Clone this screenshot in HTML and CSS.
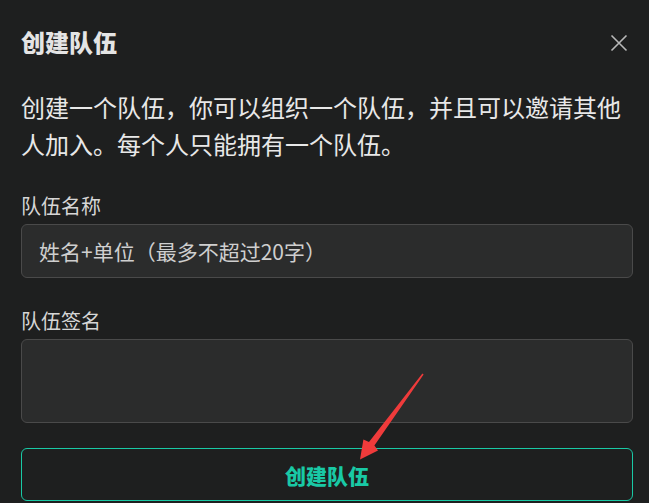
FILE: index.html
```html
<!DOCTYPE html>
<html lang="zh-CN">
<head>
<meta charset="utf-8">
<title>创建队伍</title>
<link rel="stylesheet" href="styles.css">
</head>
<body>
<div class="dialog">
  <div class="header">
    <h1 class="title">创建队伍</h1>
    <button class="close" aria-label="关闭">
      <svg width="18" height="18" viewBox="0 0 18 18"><path d="M1.5 1.5 L16.5 16.5 M16.5 1.5 L1.5 16.5" stroke="#b8b8b8" stroke-width="1.6" fill="none"/></svg>
    </button>
  </div>
  <p class="desc">创建一个队伍，你可以组织一个队伍，并且可以邀请其他人加入。每个人只能拥有一个队伍。</p>
  <label class="label label-first">队伍名称</label>
  <input class="field" type="text" placeholder="姓名+单位（最多不超过20字）">
  <label class="label">队伍签名</label>
  <textarea class="field area"></textarea>
  <button class="submit">创建队伍</button>
</div>
<svg class="arrow" width="649" height="503" viewBox="0 0 649 503">
  <polygon fill="#ef3b3b" points="423.6,374.4 374.4,445.6 378,450.6 360,459.5 363.4,439.6 369,441.9 422.4,373.6"/>
</svg>
</body>
</html>
```
FILE: styles.css
```css
* { box-sizing: border-box; }
html, body {
  margin: 0;
  padding: 0;
  background: #1e1f1f;
  width: 649px;
  height: 503px;
  overflow: hidden;
}
body {
  font-family: "Noto Sans CJK SC", "Noto Sans", sans-serif;
  color: #e2e2e2;
  position: relative;
}
.dialog {
  display: flex;
  flex-direction: column;
  padding: 26px 16px 0 21px;
}
.header {
  display: flex;
  align-items: center;
  justify-content: space-between;
  height: 32px;
}
.title {
  margin: 0;
  font-size: 24px;
  line-height: 32px;
  font-weight: 900;
  color: #e4e4e4;
}
.close {
  background: none;
  border: 0;
  padding: 0;
  width: 18px;
  height: 18px;
  margin-right: 5px;
  margin-top: 1px;
  display: flex;
}
.desc {
  margin: 30px 0 0 0;
  font-size: 24px;
  line-height: 37px;
  font-weight: 400;
  color: #e8e8e8;
}
.label {
  display: block;
  font-size: 20px;
  line-height: 28px;
  color: #d6d6d6;
  margin-top: 29px;
}
.label-first { margin-top: 30px; }
.field {
  display: block;
  width: 100%;
  margin-top: 4px;
  height: 54px;
  background: #2b2c2c;
  border: 1px solid #4a4a4a;
  border-radius: 6px;
  padding: 0 17px;
  font-family: "Noto Sans CJK SC", "Noto Sans", sans-serif;
  font-size: 21px;
  color: #d0d0d0;
  outline: none;
}
.field::placeholder { color: #cfcfcf; opacity: 1; }
.area {
  height: 84px;
  resize: none;
  padding: 10px 17px;
}
.submit {
  margin-top: 25px;
  height: 53px;
  width: 100%;
  background: transparent;
  border: 1px solid #19c9a5;
  border-radius: 6px;
  color: #19c9a5;
  font-family: "Noto Sans CJK SC", "Noto Sans", sans-serif;
  font-size: 21px;
  font-weight: 900;
  padding: 0;
}
.arrow {
  position: absolute;
  left: 0;
  top: 0;
  pointer-events: none;
}
```
